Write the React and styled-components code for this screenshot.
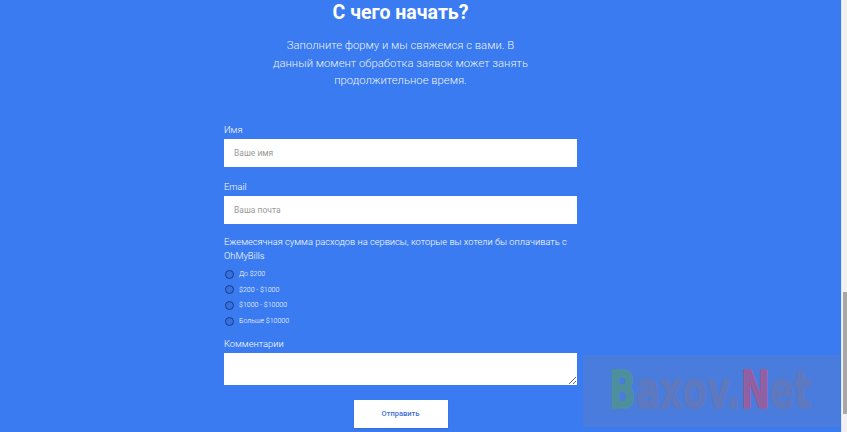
import React from "react";
import styled, { createGlobalStyle } from "styled-components";

const Global = createGlobalStyle`
  html, body { margin: 0; padding: 0; }
  body {
    background: #3a7bf1;
    font-family: Roboto, "Open Sans", sans-serif;
    overflow: hidden;
  }
`;

const Page = styled.div`
  position: relative;
  width: 847px;
  height: 432px;
  overflow: hidden;
`;

const Main = styled.main`
  width: 801px;
  display: flex;
  flex-direction: column;
  align-items: center;
`;

const Title = styled.h1`
  margin: 0;
  font-size: 19.5px;
  line-height: 26px;
  font-weight: 700;
  color: #ffffff;
`;

const Lead = styled.p`
  margin: 11px 0 0;
  width: 258px;
  text-align: center;
  font-size: 11.3px;
  line-height: 17.5px;
  font-weight: 300;
  color: rgba(255, 255, 255, 0.94);
`;

const Form = styled.form`
  width: 353px;
  margin-top: 33px;
  display: flex;
  flex-direction: column;
`;

const Label = styled.label`
  display: block;
  font-size: 9.3px;
  line-height: 14px;
  font-weight: 300;
  color: #ffffff;
  margin-top: ${(p) => p.$top || 0}px;
  margin-bottom: 2px;
`;

const Input = styled.input`
  box-sizing: border-box;
  width: 353px;
  height: 28px;
  border: none;
  outline: none;
  background: #ffffff;
  padding: 0 10px;
  font-family: Roboto, sans-serif;
  font-size: 8.5px;
  color: #333;
  &::placeholder { color: #9a9a9a; }
`;

const RadioList = styled.div`
  display: flex;
  flex-direction: column;
  margin-top: 2px;
`;

const RadioRow = styled.label`
  display: flex;
  align-items: center;
  height: 15.6px;
  gap: 5px;
  padding-left: 1px;
  font-size: 7px;
  font-weight: 300;
  color: #ffffff;
`;

const RadioDot = styled.span`
  box-sizing: border-box;
  width: 9px;
  height: 9px;
  border-radius: 50%;
  border: 1.2px solid #1b3c82;
  background: #3571e0;
  flex-shrink: 0;
`;

const TextArea = styled.textarea`
  box-sizing: border-box;
  width: 353px;
  height: 32px;
  border: none;
  outline: none;
  background: #ffffff;
  resize: vertical;
  display: block;
  margin: 0;
`;

const Submit = styled.button`
  align-self: center;
  margin-top: 15px;
  width: 94px;
  height: 28px;
  border: none;
  background: #ffffff;
  color: #3b6fd8;
  font-family: Roboto, sans-serif;
  font-size: 7.5px;
  font-weight: 500;
  box-shadow: 0 1px 2px rgba(0, 0, 0, 0.12);
  cursor: pointer;
`;

const Watermark = styled.div`
  position: absolute;
  left: 583px;
  top: 355px;
  width: 257px;
  height: 72px;
  background: rgba(120, 128, 165, 0.26);
  overflow: hidden;
`;

const MarkText = styled.div`
  position: absolute;
  left: 26px;
  top: 5px;
  font-family: "DejaVu Sans", sans-serif;
  font-weight: 700;
  font-size: 52px;
  line-height: 60px;
  color: rgba(120, 118, 155, 0.42);
  -webkit-text-stroke: 1.5px currentColor;
  white-space: nowrap;
  transform: scaleX(0.68);
  transform-origin: left top;
`;

const Green = styled.span`
  color: rgba(80, 155, 120, 0.62);
`;

const Red = styled.span`
  color: rgba(190, 80, 125, 0.62);
`;

const Scrollbar = styled.div`
  position: absolute;
  right: 0;
  top: 0;
  width: 5px;
  height: 432px;
  background: #f1f1f1;
  border-left: 1px solid #dfe9f5;
`;

const Thumb = styled.div`
  position: absolute;
  left: 1px;
  right: 0;
  top: 292px;
  height: 122px;
  background: #a8a8a8;
`;

const options = ["До $200", "$200 - $1000", "$1000 - $10000", "Больше $10000"];

export default function App() {
  return (
    <Page>
      <Global />
      <Main>
        <Title>С чего начать?</Title>
        <Lead>
          Заполните форму и мы свяжемся с вами. В данный момент обработка заявок
          может занять продолжительное время.
        </Lead>
        <Form onSubmit={(e) => e.preventDefault()}>
          <Label>Имя</Label>
          <Input placeholder="Ваше имя" />
          <Label $top={13}>Email</Label>
          <Input placeholder="Ваша почта" />
          <Label $top={11}>
            Ежемесячная сумма расходов на сервисы, которые вы хотели бы оплачивать с
            OhMyBills
          </Label>
          <RadioList>
            {options.map((o) => (
              <RadioRow key={o}>
                <RadioDot />
                {o}
              </RadioRow>
            ))}
          </RadioList>
          <Label $top={8}>Комментарии</Label>
          <TextArea />
          <Submit type="submit">Отправить</Submit>
        </Form>
      </Main>
      <Watermark>
        <MarkText>
          <Green>B</Green>axov.<Red>N</Red>et
        </MarkText>
      </Watermark>
      <Scrollbar>
        <Thumb />
      </Scrollbar>
    </Page>
  );
}
